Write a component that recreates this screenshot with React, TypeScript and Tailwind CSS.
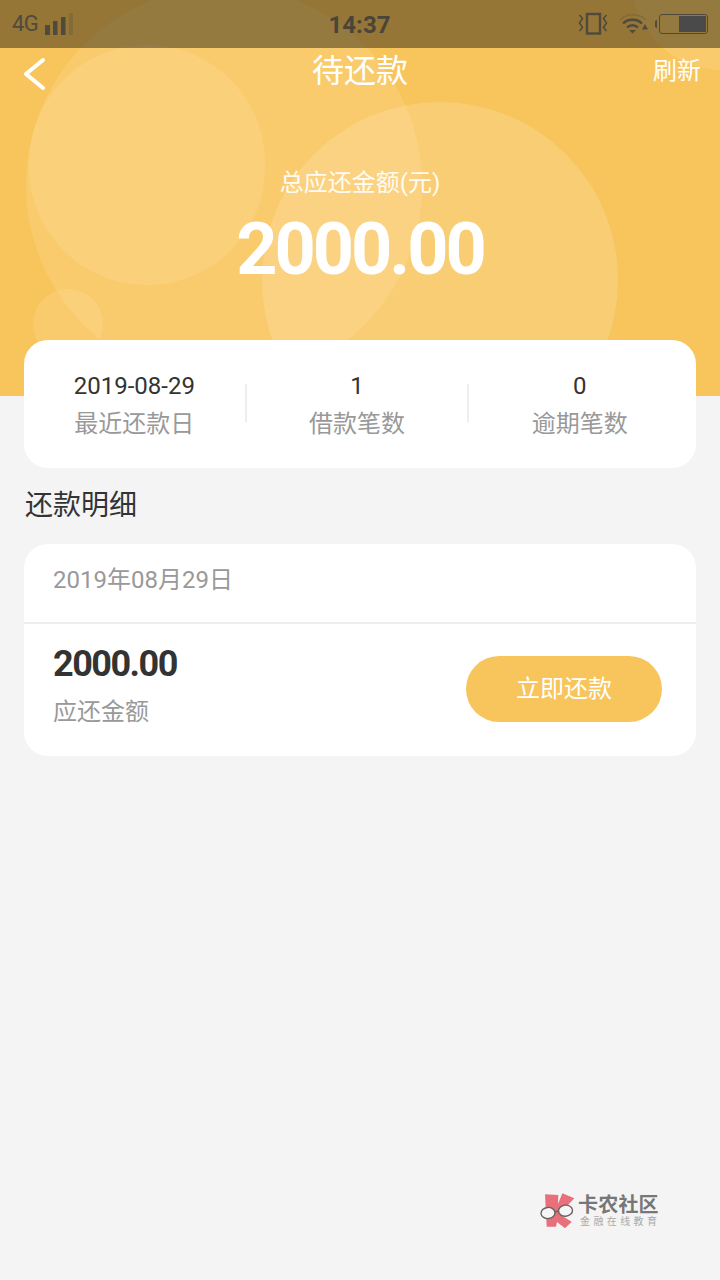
const sans = "font-['Roboto','Noto_Sans_CJK_SC',sans-serif]";

function SignalIcon() {
  return (
    <svg width="30" height="24" viewBox="0 0 30 24" fill="none">
      <rect x="1" y="13" width="5" height="10" fill="#4f4a3c" />
      <rect x="9" y="9" width="4.5" height="14" fill="#4f4a3c" />
      <rect x="17" y="5" width="4.5" height="18" fill="#4f4a3c" />
      <rect x="25" y="1" width="4" height="22" fill="#4f4a3c" fillOpacity="0.25" />
    </svg>
  );
}

function VibrateIcon() {
  return (
    <svg width="30" height="24" viewBox="0 0 30 24" fill="none" stroke="#4f4a3c">
      <rect x="9" y="2" width="13" height="19.5" strokeWidth="2.4" />
      <path d="M1.5 3l3 3.5-3 4.5 3 4.5-3 3.5" strokeWidth="1.6" />
      <path d="M28.5 3l-3 3.5 3 4.5-3 4.5 3 3.5" strokeWidth="1.6" />
    </svg>
  );
}

function WifiIcon() {
  return (
    <svg width="30" height="24" viewBox="0 0 30 24" fill="none">
      <path d="M1 8C7 1 20 1 27 8" stroke="#4f4a3c" strokeOpacity="0.25" strokeWidth="1.6" />
      <path d="M4 11.5c5-5 14-5 19 0" stroke="#4f4a3c" strokeWidth="2.4" />
      <path d="M8 15.5c3-3 8-3 11 0" stroke="#4f4a3c" strokeWidth="2.4" />
      <path d="M10 18h7l-3.5 3.5z" fill="#4f4a3c" />
      <path d="M23 17.5l3-5.5 3 5.5z" fill="#4f4a3c" />
    </svg>
  );
}

function BatteryIcon() {
  return (
    <div className="flex items-center">
      <div className="w-[2px] h-[8px] bg-[#4f4a3c] rounded-l-sm" />
      <div className="ml-[2px] w-[49px] h-[20px] border border-[#4f4a3c] rounded-[3px] flex justify-end p-[1px]">
        <div className="w-[27px] bg-[#4a4a4a]" />
      </div>
    </div>
  );
}

function KanongLogo() {
  return (
    <svg width="36" height="38" viewBox="0 0 36 38" fill="none">
      <path d="M5 2.3L18.3 3 18 12 22.3 1.3 34.3 6.3 23.3 18 19 22 31.7 29.7 25 36.3 17 30 16 34.7 6.7 34.7z" fill="#e8707c" />
      <ellipse cx="8" cy="21" rx="7" ry="5.6" fill="#f6f6f6" stroke="#6b6360" strokeWidth="1.4" transform="rotate(-6 8 21)" />
      <ellipse cx="25.5" cy="18.7" rx="7" ry="5.6" fill="#f6f6f6" stroke="#6b6360" strokeWidth="1.4" transform="rotate(-6 25.5 18.7)" />
      <path d="M15 20l3.5-1" stroke="#6b6360" strokeWidth="1.4" />
    </svg>
  );
}

export default function App() {
  return (
    <div className={`${sans} w-[720px] h-[1280px] bg-[#f4f4f4] overflow-hidden`}>
      <div className="relative h-[396px] bg-[#f8c55c] overflow-hidden">
        {/* circles behind header */}
        <div className="absolute left-[26px] top-[-13px] w-[396px] h-[396px] rounded-full bg-white/10" />
        <div className="absolute left-[29px] top-[45px] w-[236px] h-[240px] rounded-full bg-white/10" />
        <div className="absolute left-[262px] top-[102px] w-[356px] h-[356px] rounded-full bg-white/15" />
        <div className="absolute left-[33px] top-[289px] w-[70px] h-[70px] rounded-full bg-white/10" />
        <div className="absolute left-[632px] top-[-110px] w-[180px] h-[180px] rounded-full bg-white/10" />

        {/* status bar */}
        <div className="absolute inset-x-0 top-0 h-[48px] bg-black/40 flex items-center pl-[12px] pr-[12px]">
          <span className="text-[22px] text-[#4f4a3c] leading-none tracking-[-0.5px]">4G</span>
          <div className="ml-[6px]"><SignalIcon /></div>
          <span className="absolute inset-x-0 top-[10px] pr-[1px] text-center text-[24px] leading-[30px] font-bold text-[#4a4537]">14:37</span>
          <div className="ml-auto flex items-center">
            <VibrateIcon />
            <div className="ml-[11px]"><WifiIcon /></div>
            <div className="ml-[6px]"><BatteryIcon /></div>
          </div>
        </div>

        {/* nav */}
        <div className="relative pt-[48px] h-[96px] flex items-start">
          <svg className="absolute left-[22px] top-[56px]" width="24" height="36" viewBox="0 0 24 36" fill="none" stroke="#fff" strokeWidth="4" strokeLinecap="round" strokeLinejoin="round">
            <path d="M21 4L4 18l17 14" />
          </svg>
          <span className="w-full text-center text-[32px] leading-[46px] text-white">待还款</span>
          <span className="absolute right-[19px] top-[54px] text-[24px] leading-[34px] text-white">刷新</span>
        </div>

        <div className="relative mt-[69px] text-center text-white">
          <div className="text-[24px] leading-[36px] text-white/90">总应还金额(元)</div>
          <div className="mt-[7px] text-[72px] leading-[84px] font-bold tracking-[-3px]">2000.00</div>
        </div>
      </div>

      <div className="relative -mt-[56px] mx-[24px] h-[128px] pt-[2px] pr-[6px] bg-white rounded-[24px] flex items-center">
        <div className="flex-1 text-center">
          <div className="text-[24px] leading-[38px] text-[#333]">2019-08-29</div>
          <div className="text-[24px] leading-[38px] text-[#999]">最近还款日</div>
        </div>
        <div className="w-[2px] h-[38px] -mt-[4px] bg-[#eeeeee]" />
        <div className="flex-1 text-center">
          <div className="text-[24px] leading-[38px] text-[#333]">1</div>
          <div className="text-[24px] leading-[38px] text-[#999]">借款笔数</div>
        </div>
        <div className="w-[2px] h-[38px] -mt-[4px] bg-[#eeeeee]" />
        <div className="flex-1 text-center">
          <div className="text-[24px] leading-[38px] text-[#333]">0</div>
          <div className="text-[24px] leading-[38px] text-[#999]">逾期笔数</div>
        </div>
      </div>

      <div className="ml-[25px] mt-[19px] text-[28px] leading-[38px] text-[#333]">还款明细</div>

      <div className="mx-[24px] mt-[19px] bg-white rounded-[24px]">
        <div className="h-[80px] pl-[29px] pb-[6px] flex items-center text-[24px] text-[#999] border-b-2 border-[#eeeeee]">2019年08月29日</div>
        <div className="h-[132px] pl-[29px] pr-[34px] flex items-center justify-between">
          <div className="-mt-[10px]">
            <div className="text-[36px] leading-[48px] font-bold text-[#333] tracking-[-1.5px]">2000.00</div>
            <div className="text-[24px] leading-[36px] mt-[6px] text-[#999]">应还金额</div>
          </div>
          <button className="w-[196px] h-[66px] -mt-[2px] rounded-full bg-[#f8c55c] text-white text-[24px]">立即还款</button>
        </div>
      </div>

      <div className="mt-[436px] ml-[540px] flex items-center gap-[2px]">
        <KanongLogo />
        <div>
          <div className="text-[20px] leading-[22px] font-bold text-[#777] tracking-[0.2px]">卡农社区</div>
          <div className="ml-[2px] text-[10px] leading-[12px] text-[#aaa] tracking-[3.4px]">金融在线教育</div>
        </div>
      </div>
    </div>
  );
}
